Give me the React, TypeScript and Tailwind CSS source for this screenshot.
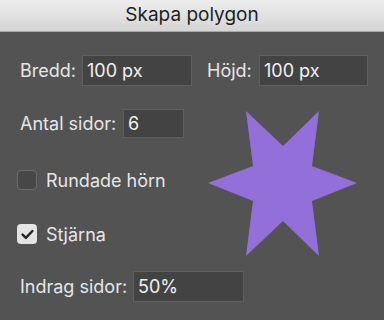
import React from 'react';

const Field: React.FC<{ value: string; width: string }> = ({ value, width }) => (
  <div
    className={`${width} shrink-0 h-full flex items-center pl-[4px] bg-[#434343] border border-[#5f5f5f] text-[18px] text-[#f0f0f0]`}
  >
    {value}
  </div>
);

const Check: React.FC<{ checked?: boolean; label: string }> = ({ checked, label }) => (
  <div className="flex items-center gap-[9px] h-[20px] -ml-[3px]">
    {checked ? (
      <div className="w-[20px] h-[20px] rounded-[4px] bg-[#e4e4e4] flex items-center justify-center">
        <svg width="13" height="11" viewBox="0 0 13 11">
          <path d="M1.6 5.6 L4.9 8.9 L11.4 2" fill="none" stroke="#262626" strokeWidth="2.4" strokeLinecap="round" strokeLinejoin="round" />
        </svg>
      </div>
    ) : (
      <div className="w-[20px] h-[20px] rounded-[4px] bg-[#474747] border border-[#6c6c6c]" />
    )}
    <span className="text-[18px] text-[#e6e6e6]">{label}</span>
  </div>
);

export default function App() {
  return (
    <div className="w-[384px] h-[320px] overflow-hidden bg-[#535353] font-['Inter','Liberation_Sans',sans-serif]">
      <div className="h-[32px] bg-gradient-to-b from-[#ededed] to-[#d5d5d5] border-b border-[#a9a9a9] flex items-center justify-center text-[19px] text-[#1e1e1e]">
        Skapa polygon
      </div>
      <div className="px-[20px] pt-[23px]">
        <div className="flex items-center h-[31px] text-[#e6e6e6] text-[18px]">
          <span className="w-[62px] shrink-0">Bredd:</span>
          <Field value="100 px" width="w-[110px]" />
          <span className="ml-[15px] w-[52px] shrink-0">Höjd:</span>
          <Field value="100 px" width="w-[109px]" />
        </div>

        <div className="flex mt-[23px]">
          <div className="w-[188px] shrink-0 flex flex-col">
            <div className="flex items-center h-[29px] text-[#e6e6e6] text-[18px]">
              <span className="w-[103px] shrink-0">Antal sidor:</span>
              <Field value="6" width="w-[61px]" />
            </div>
            <div className="mt-[32px]">
              <Check label="Rundade hörn" />
            </div>
            <div className="mt-[34px]">
              <Check checked label="Stjärna" />
            </div>
          </div>
          <svg className="mt-[2px] shrink-0" width="150" height="146" viewBox="0 0 150 146">
            <polygon
              points="38,0 75,35 111,0 104,55 149,72 104,90 111,145 75,110 38,145 45,90 0,72 45,55"
              fill="#9370d9"
            />
          </svg>
        </div>

        <div className="flex items-center h-[31px] mt-[14px] text-[#e6e6e6] text-[18px]">
          <span className="w-[113px] shrink-0">Indrag sidor:</span>
          <Field value="50%" width="w-[111px]" />
        </div>
      </div>
    </div>
  );
}
